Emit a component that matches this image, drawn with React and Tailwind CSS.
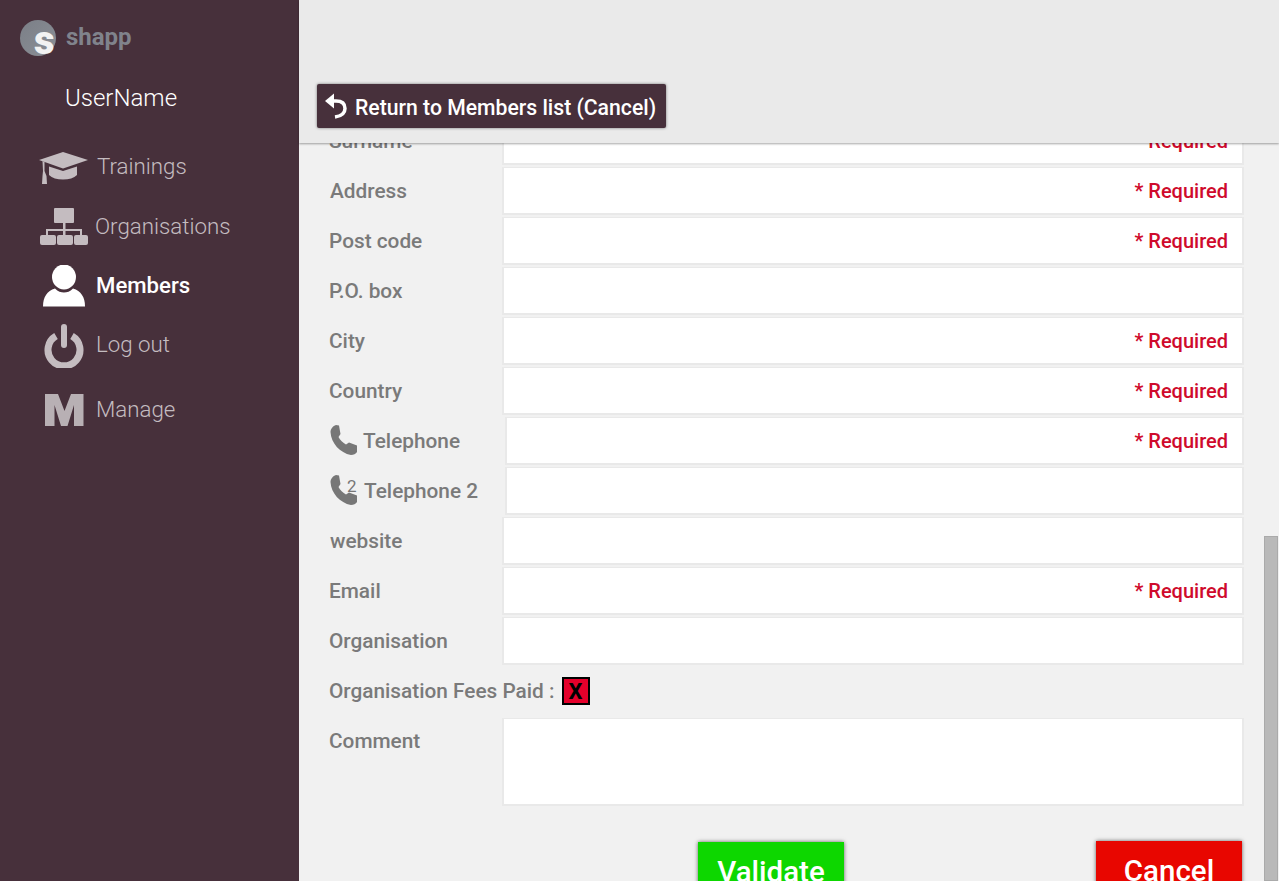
import React from "react";

const font = { fontFamily: "Roboto, sans-serif" };

const CapIcon = () => (
  <svg width="50" height="34" viewBox="0 -1 50 34" fill="#c4bcc0">
    <path d="M0 8 24 0 49 8 24 16.500Z" />
    <path d="M10 14.500 24 19 38 14.500V23C35 26 30 27.500 24 27.500S13 26 10 23Z" />
    <path d="M3.500 9 5.500 10V19L7.500 24 8 32H3L3.500 24 4 19Z" />
  </svg>
);

const OrgIcon = () => (
  <svg width="50" height="40" viewBox="0 0 50 40" fill="#c4bcc0">
    <rect x="15" y="1" width="20" height="15" rx="1" />
    <rect x="24" y="16" width="2.500" height="12" />
    <rect x="7" y="22" width="36" height="2" />
    <rect x="7" y="22" width="2" height="6" />
    <rect x="41" y="22" width="2" height="6" />
    <rect x="1" y="28" width="16" height="10" rx="2" />
    <rect x="18" y="28" width="16" height="10" rx="2" />
    <rect x="35" y="28" width="14" height="10" rx="2" />
  </svg>
);

const MemberIcon = () => (
  <svg width="44" height="42" viewBox="0 0 44 42" fill="#fff">
    <ellipse cx="22" cy="12" rx="12" ry="12.500" />
    <path d="M1 41.500C1 32 5 26 13 23.500 16 26.500 19 27.500 22 27.500S28 26.500 31 23.500C39 26 43 32 43 41.500Z" />
  </svg>
);

const PowerIcon = () => (
  <svg width="40" height="44" viewBox="0 0 40 44" fill="none" stroke="#c4bcc0">
    <path d="M12 12A16 16 0 1 0 28 12" strokeWidth="7" />
    <path d="M20 3V21" strokeWidth="6" strokeLinecap="round" />
  </svg>
);

const ManageIcon = () => (
  <svg width="39" height="32" viewBox="0 0 39 32" fill="#b8b0b4">
    <path d="M0 0H13L19.500 17 26 0H38.500V32H29V11L22.500 32H16L9.500 11V32H0Z" />
  </svg>
);

const PhoneIcon = () => (
  <svg width="28" height="30" viewBox="-1 0 28 30" fill="#777">
    <path d="M.5 7C.5 4 3 1 6 0L9 .5 10.500 9 8.500 12C10 15 13 18 16 19.500L19 17.500 27 20.500 28 24C28 27 25 30 21 30 10 28 1 18 .5 7Z" />
  </svg>
);

const ReturnIcon = () => (
  <svg width="24" height="26" viewBox="0 0 24 26" fill="none" stroke="#fff">
    <path d="M1 8 10 .5V15.500Z" fill="#fff" strokeWidth="0" />
    <path d="M8 8H12C18 8 21 11 21 15.500S18 23 11 24" strokeWidth="3.500" />
  </svg>
);

const navItems = [
  { label: "Trainings", icon: <CapIcon />, row: "h-[34px] mt-[35px] pl-[39px] gap-[8px]", text: "-mt-[2px]" },
  { label: "Organisations", icon: <OrgIcon />, row: "h-[40px] mt-[22px] pl-[39px] gap-[6px]", text: "" },
  { label: "Members", icon: <MemberIcon />, row: "h-[42px] mt-[18px] pl-[42px] gap-[10px]", active: true, text: "" },
  { label: "Log out", icon: <PowerIcon />, row: "h-[44px] mt-[17px] pl-[44px] gap-[12px]", text: "-mt-[2px]" },
  { label: "Manage", icon: <ManageIcon />, row: "h-[32px] mt-[26px] pl-[45px] gap-[12px]", text: "" },
];

const rows = [
  { label: "Surname", required: true },
  { label: "Address", required: true, indent: "pl-[1px]" },
  { label: "Post code", required: true },
  { label: "P.O. box" },
  { label: "City", required: true },
  { label: "Country", required: true },
  { label: "Telephone", required: true, phone: true },
  { label: "Telephone 2", phone: true, second: true },
  { label: "website", indent: "pl-[1px]" },
  { label: "Email", required: true },
  { label: "Organisation" },
];

const Field = ({ required, className = "" }) => (
  <div className={`h-[48px] bg-white border-x-2 border-t border-b-2 border-[#e9e9e9] flex items-center justify-end pr-[14px] ${className}`}>
    {required && <span className="text-[20px] font-medium text-[#cf0a2c]">* Required</span>}
  </div>
);

const Row = ({ label, required, indent = "", phone, second }) => (
  <div className="flex h-[46px] mb-[4px] items-center">
    {phone ? (
      <>
        <div className="w-[176px] flex items-center text-[20.8px] font-medium text-[#7a7a7a]">
          <span className="relative w-[34px] shrink-0 -mt-[2px]">
            <PhoneIcon />
            {second && <span className="absolute left-[18px] top-[1px] text-[17px] font-normal leading-[20px] text-[#777]">2</span>}
          </span>
          <span className={second ? "ml-[1px] pt-[2px]" : "pt-[2px]"}>{label}</span>
        </div>
        <Field required={required} className="flex-1" />
      </>
    ) : (
      <>
        <div className={`w-[173px] pt-[2px] text-[20.8px] font-medium text-[#7a7a7a] ${indent}`}>{label}</div>
        <Field required={required} className="flex-1" />
      </>
    )}
  </div>
);

export default function App() {
  return (
    <div className="flex w-[1279px] h-[881px] overflow-hidden bg-[#f1f1f1]" style={font}>
      <aside className="w-[299px] h-full shrink-0 bg-[#47303b]">
        <div className="flex items-center h-[36px] mt-[20px] pl-[20px]">
          <div className="relative w-[36px] h-[36px] rounded-full bg-gradient-to-br from-[#7b7f87] to-[#8b8f96]">
            <span className="absolute left-[14px] top-[-1px] text-[40px] leading-[44px] font-black text-[#f2f2f2]">s</span>
          </div>
          <span className="ml-[10px] -mt-[3px] text-[24px] font-bold text-[#80838c]">shapp</span>
        </div>
        <div className="pl-[65px] mt-[24px] h-[36px] text-[24px] font-light leading-[36px] text-white">UserName</div>
        <nav className="flex flex-col">
          {navItems.map((item) => (
            <div key={item.label} className={`flex items-center ${item.row}`}>
              {item.icon}
              <span className={`${item.text} ${item.active ? "text-[22.2px] font-medium text-white" : "text-[22.3px] font-light text-[#c4bcc0]"}`}>
                {item.label}
              </span>
            </div>
          ))}
        </nav>
      </aside>

      <main className="relative flex-1 h-full flex flex-col min-w-0">
        <header className="h-[143px] shrink-0 bg-[#eaeaea] shadow-[0_1px_2px_rgba(0,0,0,0.35)] relative z-10 pt-[84px] pl-[18px]">
          <button className="h-[44px] w-[349px] flex items-center pl-[7px] gap-[7px] bg-[#47303b] rounded-[2px] shadow-[0_0_3px_rgba(0,0,0,0.5)] text-[21.2px] font-medium text-white whitespace-nowrap">
            <ReturnIcon />
            <span className="pt-[3px]">Return to Members list (Cancel)</span>
          </button>
        </header>

        <div className="flex-1 overflow-hidden pl-[30px] pr-[35px]">
          <form className="-mt-[25px]">
            {rows.map((row) => (
              <Row key={row.label} {...row} />
            ))}
            <div className="flex items-center h-[46px] mb-[4px] text-[20.8px] font-medium text-[#7a7a7a]">
              <span className="pt-[2px]">Organisation Fees Paid :</span>
              <span className="ml-[7px] w-[28px] h-[28px] border-2 border-black bg-[#e4002b] flex items-center justify-center text-[22px] font-bold text-black">X</span>
            </div>
            <div className="flex">
              <div className="w-[173px] pt-[8px] text-[20.8px] font-medium text-[#7a7a7a]">Comment</div>
              <div className="flex-1 h-[88px] bg-white border-x-2 border-t border-b-2 border-[#e9e9e9]" />
            </div>
            <div className="flex justify-between mt-[35px] pl-[369px]">
              <button type="button" className="w-[146px] h-[60px] mt-[1px] bg-[#0dd700] shadow-[0_0_4px_rgba(0,0,0,0.6)] text-[29.5px] font-medium text-white">Validate</button>
              <button type="button" className="w-[146px] h-[60px] mr-[2px] bg-[#e80600] shadow-[0_0_4px_rgba(0,0,0,0.6)] text-[29.5px] font-medium text-white">Cancel</button>
            </div>
          </form>
        </div>

        <div className="absolute right-[1px] bottom-0 w-[14px] h-[345px] bg-[#b9b9b9] border border-[#aaa]" />
      </main>
    </div>
  );
}
